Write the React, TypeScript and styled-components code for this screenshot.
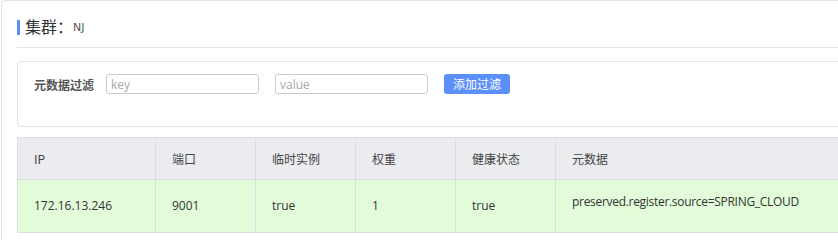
import styled, { createGlobalStyle } from "styled-components";

const GlobalStyle = createGlobalStyle`
  html, body {
    margin: 0;
    padding: 0;
    background: #fff;
    overflow: hidden;
  }
  body {
    font-family: "Open Sans", "Noto Sans CJK SC", sans-serif;
    color: #333;
  }
`

const Panel = styled.div`
  width: 1000px;
  margin-left: 1px;
  padding: 12px 15px 0 15px;
  border: 1px solid #e2e2e8;
  border-radius: 4px;
  box-sizing: border-box;
  height: 242px;
`

const Title = styled.div`
  display: flex;
  align-items: center;
  height: 34px;
  border-bottom: 1px solid #e4e4ea;
`

const TitleBar = styled.span`
  display: inline-block;
  width: 3px;
  height: 15px;
  background: #5b8ff9;
  margin-right: 5px;
  margin-top: -5px;
`

const TitleText = styled.span`
  font-family: "Noto Sans CJK SC", sans-serif;
  font-size: 16px;
  color: #333;
  margin-top: -8px;
`

const TitleValue = styled.span`
  font-family: "DejaVu Sans", sans-serif;
  font-size: 11px;
  color: #555;
  margin-top: -5px;
`

const FilterBox = styled.div`
  margin-top: 13px;
  height: 66px;
  padding: 12px 16px 0 16px;
  box-sizing: border-box;
  border: 1px solid #e2e2e8;
  border-radius: 4px;
`

const FilterRow = styled.div`
  display: flex;
  align-items: center;
  height: 20px;
`

const FilterLabel = styled.label`
  font-family: "Noto Sans CJK SC", sans-serif;
  font-size: 12px;
  font-weight: 700;
  color: #555;
  margin-right: 12px;
`

const TextInput = styled.input`
  width: 153px;
  height: 20px;
  box-sizing: border-box;
  border: 1px solid #c9cad2;
  border-radius: 3px;
  padding: 0 4px;
  margin-right: 16px;
  font-family: "Open Sans", sans-serif;
  font-size: 12px;
  color: #333;
  outline: none;
  &::placeholder {
    color: #a8a8a8;
  }
`

const AddButton = styled.button`
  width: 66px;
  height: 20px;
  border: none;
  border-radius: 3px;
  background: #5b8ff9;
  color: #fff;
  font-family: "Noto Sans CJK SC", sans-serif;
  font-size: 12px;
  padding: 0;
  line-height: 20px;
`

const Table = styled.table`
  margin-top: 10px;
  width: 100%;
  border-collapse: collapse;
  table-layout: fixed;
  font-size: 12px;
`

const HeadCell = styled.th<{ w?: number }>`
  width: ${(p) => (p.w ? `${p.w}px` : "auto")};
  box-sizing: border-box;
  height: 42px;
  padding: 0 0 0 16px;
  text-align: left;
  font-weight: 400;
  color: #444;
  background: #ebecf0;
  border: 1px solid #dcdde3;
  font-family: "Noto Sans CJK SC", sans-serif;
`

const BodyCell = styled.td<{ top?: boolean }>`
  height: 53px;
  padding: ${(p) => (p.top ? "13px 0 0 16px" : "0 0 0 16px")};
  vertical-align: ${(p) => (p.top ? "top" : "middle")};
  letter-spacing: ${(p) => (p.top ? "-0.3px" : "0")};
  line-height: 18px;
  box-sizing: border-box;
  color: #333;
  background: #e2fcda;
  border: 1px solid #dcdde3;
`

const columns = [
  { title: "IP", w: 138 },
  { title: "端口", w: 100 },
  { title: "临时实例", w: 100 },
  { title: "权重", w: 100 },
  { title: "健康状态", w: 100 },
  { title: "元数据" },
]

const rows = [
  {
    ip: "172.16.13.246",
    port: "9001",
    ephemeral: "true",
    weight: "1",
    healthy: "true",
    metadata: "preserved.register.source=SPRING_CLOUD",
  },
]

export default function App() {
  return (
    <>
      <GlobalStyle />
      <Panel>
        <Title>
          <TitleBar />
          <TitleText>集群：</TitleText>
          <TitleValue>NJ</TitleValue>
        </Title>

        <FilterBox>
          <FilterRow>
            <FilterLabel>元数据过滤</FilterLabel>
            <TextInput placeholder="key" />
            <TextInput placeholder="value" />
            <AddButton>添加过滤</AddButton>
          </FilterRow>
        </FilterBox>

        <Table>
          <thead>
            <tr>
              {columns.map((c) => (
                <HeadCell key={c.title} w={c.w}>{c.title}</HeadCell>
              ))}
            </tr>
          </thead>
          <tbody>
            {rows.map((r) => (
              <tr key={r.ip}>
                <BodyCell>{r.ip}</BodyCell>
                <BodyCell>{r.port}</BodyCell>
                <BodyCell>{r.ephemeral}</BodyCell>
                <BodyCell>{r.weight}</BodyCell>
                <BodyCell>{r.healthy}</BodyCell>
                <BodyCell top>{r.metadata}</BodyCell>
              </tr>
            ))}
          </tbody>
        </Table>
      </Panel>
    </>
  )
}
